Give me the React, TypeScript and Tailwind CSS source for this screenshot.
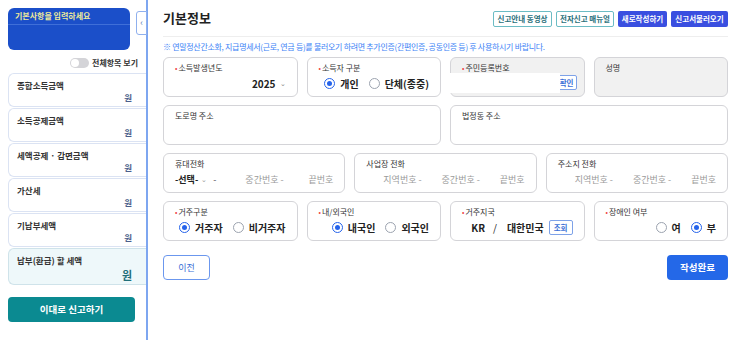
import React from "react";

const font = { fontFamily: '"Noto Sans CJK KR", "Noto Sans", sans-serif' };

function Radio({ checked, label }: { checked?: boolean; label: string }) {
  return (
    <span className="flex items-center gap-[5px]">
      <span
        className={
          checked
            ? "w-[11px] h-[11px] rounded-full border border-[#2563eb] flex items-center justify-center bg-white"
            : "w-[11px] h-[11px] rounded-full border border-[#9ca3af] bg-white"
        }
      >
        {checked && <span className="w-[5px] h-[5px] rounded-full bg-[#2563eb]" />}
      </span>
      <span className="text-[10px] leading-[15px] font-bold text-[#222]">{label}</span>
    </span>
  );
}

function Label({ text, req }: { text: string; req?: boolean }) {
  return (
    <div className="text-[8px] leading-[10px] text-[#333] flex items-center">
      {req && <span className="text-[#ef4444] mr-[1px] text-[7px] leading-[10px]">•</span>}
      {text}
    </div>
  );
}

function Card({ children, gray }: { children: React.ReactNode; gray?: boolean }) {
  return (
    <div
      className={
        "h-[40px] rounded-[6px] border border-[#d4d4d8] px-[11px] pt-[5px] flex flex-col relative " +
        (gray ? "bg-[#f1f1f1]" : "bg-white")
      }
    >
      {children}
    </div>
  );
}

function SideCard({ title, hl }: { title: string; hl?: boolean }) {
  return (
    <div
      className={
        "rounded-l-[6px] border border-r-0 px-[8px] pt-[6px] " +
        (hl ? "h-[37px] bg-[#eef8fa] border-[#cfe3ea]" : "h-[34px] bg-white border-[#dbe3f3]")
      }
    >
      <div className="text-[8.5px] leading-[11px] font-bold text-[#333]">{title}</div>
      <div
        className={
          "text-right pr-[6px] font-bold " +
          (hl ? "text-[11px] leading-[14px] mt-[2px] text-[#1f6f7a]" : "text-[8.5px] leading-[11px] mt-[1px] text-[#4b5e8a]")
        }
      >
        원
      </div>
    </div>
  );
}

export default function App() {
  return (
    <div style={font} className="w-[736px] h-[340px] bg-white flex overflow-hidden">
      {/* Sidebar */}
      <div className="w-[148px] h-[340px] border-r-2 border-[#7ea6f0] relative pl-[8px] shrink-0">
        <div className="mt-[8px] w-[122px] h-[42px] rounded-[6px] bg-[#1b4fc9]">
          <div className="h-[17px] border-b border-[#3f6fd8] px-[7px] pt-[3px] text-[8px] leading-[10px] font-bold text-[#eeea9a]">
            기본사항을 입력하세요
          </div>
        </div>
        <div className="absolute right-[-1px] top-[11px] w-[11px] h-[24px] bg-white border border-[#8fb0ee] rounded-l-[3px] flex items-center justify-center text-[#5b7bb5] text-[9px]">
          ‹
        </div>
        <div className="flex justify-end items-center gap-[3px] pr-[8px] mt-[7px] h-[12px]">
          <span className="w-[19px] h-[10px] rounded-full bg-[#d4d4d8] relative">
            <span className="absolute left-[1px] top-[1px] w-[8px] h-[8px] rounded-full bg-white" />
          </span>
          <span className="text-[8px] font-bold text-[#333]">전체항목 보기</span>
        </div>
        <div className="mt-[4px] flex flex-col gap-[1px]">
          <SideCard title="종합소득금액" />
          <SideCard title="소득공제금액" />
          <SideCard title="세액공제 · 감면금액" />
          <SideCard title="가산세" />
          <SideCard title="기납부세액" />
          <SideCard title="납부(환급) 할 세액" hl />
        </div>
        <button className="mt-[12px] w-[127px] h-[25px] rounded-[4px] bg-[#0b8a91] text-white text-[9.5px] font-bold">
          이대로 신고하기
        </button>
      </div>

      {/* Main */}
      <div className="flex-1 pl-[15px] pr-[8px]">
        <div className="h-[37px] flex items-center justify-between border-b border-[#eeeeee]">
          <div className="text-[13px] font-bold text-[#222]">기본정보</div>
          <div className="flex gap-[4px] mt-[2px]">
            <span className="w-[59px] h-[16px] flex items-center justify-center border border-[#6cbcc4] rounded-[2px] text-[7.5px] font-bold text-[#2a6f7a]">
              신고안내 동영상
            </span>
            <span className="w-[58px] h-[16px] flex items-center justify-center border border-[#6cbcc4] rounded-[2px] text-[7.5px] font-bold text-[#2a6f7a]">
              전자신고 매뉴얼
            </span>
            <span className="w-[49px] h-[16px] flex items-center justify-center bg-[#3a4fe0] rounded-[2px] text-[7.5px] font-bold text-white">
              새로작성하기
            </span>
            <span className="w-[57px] h-[16px] flex items-center justify-center bg-[#3a4fe0] rounded-[2px] text-[7.5px] font-bold text-white">
              신고서불러오기
            </span>
          </div>
        </div>
        <div className="mt-[4px] text-[8px] leading-[12px] tracking-[-0.3px] text-[#3b82f6]">
          ※ 연말정산간소화, 지급명세서(근로, 연금 등)를 불러오기 하려면 추가인증(간편인증, 공동인증 등) 후 사용하시기 바랍니다.
        </div>

        <div className="mt-[4px] flex flex-col gap-[8px]">
          <div className="grid grid-cols-4 gap-[9px]">
            <Card>
              <Label text="소득발생년도" req />
              <div className="mt-[3px] flex justify-end items-center gap-[4px] text-[10px] leading-[15px] font-bold text-[#222]">
                2025 <span className="text-[7px] text-[#888] font-normal">⌄</span>
              </div>
            </Card>
            <Card>
              <Label text="소득자 구분" req />
              <div className="mt-[3px] flex justify-end items-center gap-[10px]">
                <Radio checked label="개인" />
                <Radio label="단체(종중)" />
              </div>
            </Card>
            <Card gray>
              <Label text="주민등록번호" req />
              <div className="absolute right-[7px] top-[17px] h-[15px] w-[20px] border border-[#7ea2e8] rounded-[2px] bg-white text-[7.5px] font-bold text-[#3b6fd6] flex items-center justify-end pr-[2px]">
                확인
              </div>
              <div className="absolute left-[-2px] top-[15px] w-[111px] h-[20px] bg-white" />
            </Card>
            <Card gray>
              <Label text="성명" />
            </Card>
          </div>

          <div className="grid grid-cols-2 gap-[9px]">
            <Card>
              <Label text="도로명 주소" />
            </Card>
            <Card>
              <Label text="법정동 주소" />
            </Card>
          </div>

          <div className="grid grid-cols-3 gap-[9px]">
            <Card>
              <Label text="휴대전화" />
              <div className="mt-[3px] flex items-center text-[9px] leading-[15px] text-[#9a9a9a]">
                <span className="font-bold text-[#222]">-선택-</span>
                <span className="text-[7px] ml-[3px]">⌄</span>
                <span className="ml-[6px] text-[#555]">-</span>
                <span className="ml-[29px]">중간번호 -</span>
                <span className="ml-auto">끝번호</span>
              </div>
            </Card>
            <Card>
              <Label text="사업장 전화" />
              <div className="mt-[3px] flex items-center text-[9px] leading-[15px] text-[#9a9a9a] pl-[17px]">
                <span>지역번호 -</span>
                <span className="ml-[20px]">중간번호 -</span>
                <span className="ml-auto">끝번호</span>
              </div>
            </Card>
            <Card>
              <Label text="주소지 전화" />
              <div className="mt-[3px] flex items-center text-[9px] leading-[15px] text-[#9a9a9a] pl-[17px]">
                <span>지역번호 -</span>
                <span className="ml-[20px]">중간번호 -</span>
                <span className="ml-auto">끝번호</span>
              </div>
            </Card>
          </div>

          <div className="grid grid-cols-4 gap-[9px]">
            <Card>
              <Label text="거주구분" req />
              <div className="mt-[3px] flex justify-end items-center gap-[10px]">
                <Radio checked label="거주자" />
                <Radio label="비거주자" />
              </div>
            </Card>
            <Card>
              <Label text="내/외국인" req />
              <div className="mt-[3px] flex justify-end items-center gap-[10px]">
                <Radio checked label="내국인" />
                <Radio label="외국인" />
              </div>
            </Card>
            <Card>
              <Label text="거주지국" req />
              <div className="mt-[3px] flex justify-end items-center text-[10px] leading-[15px] font-bold text-[#222]">
                <span>KR</span>
                <span className="ml-[8px] font-normal">/</span>
                <span className="ml-[10px]">대한민국</span>
                <span className="ml-[5px] h-[15px] px-[4px] border border-[#7ea2e8] rounded-[2px] text-[7.5px] text-[#3b6fd6] flex items-center">
                  조회
                </span>
              </div>
            </Card>
            <Card>
              <Label text="장애인 여부" req />
              <div className="mt-[3px] flex justify-end items-center gap-[10px]">
                <Radio label="여" />
                <Radio checked label="부" />
              </div>
            </Card>
          </div>
        </div>

        <div className="mt-[14px] flex justify-between">
          <button className="w-[47px] h-[25px] rounded-[4px] border border-[#6b97ee] bg-white text-[9px] text-[#3b6fd6]">
            이전
          </button>
          <button className="w-[61px] h-[25px] rounded-[4px] bg-[#2468e8] text-white text-[9.5px] font-bold">
            작성완료
          </button>
        </div>
      </div>
    </div>
  );
}
